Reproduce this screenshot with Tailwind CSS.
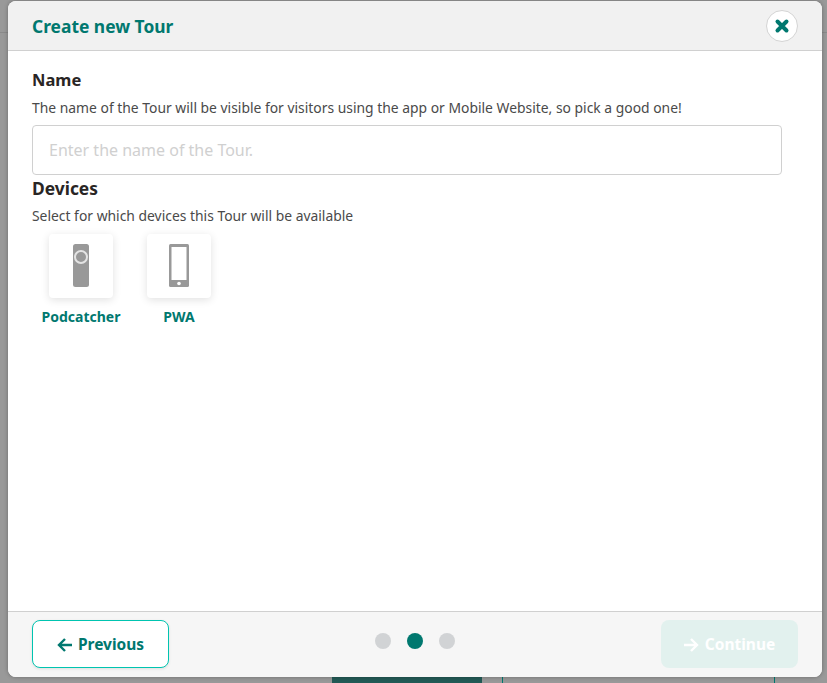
<!DOCTYPE html>
<html lang="en">
<head>
  <meta charset="UTF-8" />
  <title>Create new Tour</title>
  <script src="https://cdn.jsdelivr.net/npm/@tailwindcss/browser@4"></script>
</head>
<body class="relative h-[683px] w-[827px] overflow-hidden bg-[#999999] font-['Noto_Sans',sans-serif] text-[#444444]">

  <!-- page behind the backdrop -->
  <div class="absolute left-0 top-[32px] h-px w-full bg-[#8a8a8a]"></div>
  <div class="absolute left-[332px] top-[677px] h-[6px] w-[150px] bg-[#235a56]"></div>
  <div class="absolute left-[502px] top-[677px] h-[6px] w-px bg-[#00786f]"></div>
  <div class="absolute left-[774px] top-[677px] h-[6px] w-px bg-[#00786f]"></div>

  <!-- modal -->
  <div class="absolute left-[8px] top-[1px] flex h-[676px] w-[814px] flex-col overflow-hidden rounded-lg bg-white shadow-[0_0_4px_rgba(0,0,0,0.3)]">

    <div class="flex h-[50px] shrink-0 items-center justify-between border-b border-[#d0d0d0] bg-[#f1f1f1] px-[24px]">
      <h2 class="pt-[2px] text-[17.4px] font-bold text-[#00786f]">Create new Tour</h2>
      <button class="flex size-[32px] items-center justify-center rounded-full border border-[#d4d4d4] bg-white">
        <svg width="16" height="16" viewBox="0 0 16 16"><path d="M3.500 3.500l9 9M12.500 3.500l-9 9" stroke="#00786f" stroke-width="4" stroke-linecap="round"/></svg>
      </button>
    </div>

    <div class="flex-1 px-[24px]">
      <h3 class="mt-[17px] text-[16.500px] leading-[24px] font-bold text-[#292524]">Name</h3>
      <p class="mt-[6px] text-[13.880px] leading-[20px] text-[#4a4a4a]">The name of the Tour will be visible for visitors using the app or Mobile Website, so pick a good one!</p>
      <input type="text" placeholder="Enter the name of the Tour." class="mt-[7px] block h-[50px] w-[750px] rounded border border-[#d0d0d0] bg-white px-[16px] text-[16px] placeholder-[#d0d0d0]" />

      <h3 class="mt-[1px] text-[17.400px] leading-[24px] font-bold text-[#292524]">Devices</h3>
      <p class="mt-[6px] text-[13.880px] leading-[20px] text-[#4a4a4a]">Select for which devices this Tour will be available</p>

      <div class="mt-[8px] flex">
        <div class="flex w-[98px] flex-col items-center">
          <div class="flex size-[64px] items-center justify-center rounded bg-white pb-[2px] shadow-[0_2px_8px_rgba(0,0,0,0.12)]">
            <svg width="16" height="43" viewBox="0 0 16 43">
              <rect x="0" y="0" width="16" height="43" rx="2.500" fill="#999999"/>
              <circle cx="8" cy="13" r="6" fill="none" stroke="#e4e4e4" stroke-width="2"/>
            </svg>
          </div>
          <span class="mt-[9px] text-[14px] leading-[20px] font-bold whitespace-nowrap text-[#00786f]">Podcatcher</span>
        </div>
        <div class="flex w-[98px] flex-col items-center">
          <div class="flex size-[64px] items-center justify-center rounded bg-white pb-[2px] shadow-[0_2px_8px_rgba(0,0,0,0.12)]">
            <svg width="20" height="43" viewBox="0 0 20 43">
              <rect x="0" y="0" width="20" height="43" rx="1.500" fill="#999999"/>
              <rect x="2.500" y="3" width="15" height="33" fill="#ffffff"/>
              <circle cx="10" cy="39.500" r="1.800" fill="#ffffff"/>
            </svg>
          </div>
          <span class="mt-[9px] text-[14px] leading-[20px] font-bold text-[#00786f]">PWA</span>
        </div>
      </div>
    </div>

    <div class="flex h-[66px] shrink-0 items-start justify-between border-t border-[#d0d0d0] bg-[#f6f6f6] px-[24px] pt-[8px]">
      <button class="flex h-[48px] w-[137px] items-center justify-center gap-[6px] rounded-lg border border-[#00c4b0] bg-white pt-[2px] text-[15.500px] font-bold text-[#00786f] shadow-[0_1px_3px_rgba(0,0,0,0.1)]">
        <svg width="15" height="14" viewBox="0 0 15 14" fill="none" stroke="#00786f" stroke-width="2.400"><path d="M15 7H2M8 1L2 7l6 6"/></svg>
        Previous
      </button>
      <div class="mt-[13px] flex gap-[16px]">
        <span class="size-[16px] rounded-full bg-[#d1d3d5]"></span>
        <span class="size-[16px] rounded-full bg-[#00786f]"></span>
        <span class="size-[16px] rounded-full bg-[#d1d3d5]"></span>
      </div>
      <button class="flex h-[48px] w-[137px] items-center justify-center gap-[6px] rounded-lg bg-[#e2f1ee] pt-[2px] text-[15.500px] font-bold text-white">
        <svg width="15" height="14" viewBox="0 0 15 14" fill="none" stroke="#ffffff" stroke-width="2.400"><path d="M0 7h13M7 1l6 6-6 6"/></svg>
        Continue
      </button>
    </div>
  </div>
</body>
</html>
